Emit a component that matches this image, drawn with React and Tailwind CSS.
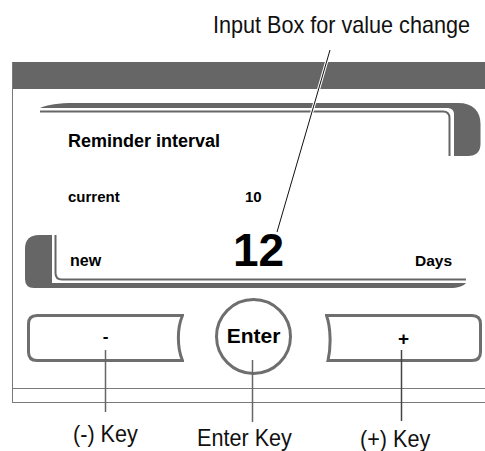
import React from "react";

const sans = "font-['Liberation_Sans',Arial,sans-serif]";

function MinusKey() {
    return (
        <div className="relative w-[157px] h-[48px] mt-[16px] ml-[14px] flex items-center justify-center">
            <svg className="absolute inset-0" width="157" height="48" viewBox="0 0 157 48">
                <path
                    d="M10 1.5 L155.5 1.5 C150 14 150 34 155.5 46.5 L10 46.5 Q1.5 46.5 1.5 38 L1.5 10 Q1.5 1.5 10 1.5 Z"
                    fill="none"
                    stroke="#6e6e6e"
                    strokeWidth="3"
                />
            </svg>
            <span className="relative text-[17px] font-bold leading-none text-black -mt-[4px]">-</span>
        </div>
    );
}

function PlusKey() {
    return (
        <div className="relative w-[157px] h-[48px] mt-[16px] ml-[33px] flex items-center justify-center">
            <svg className="absolute inset-0" width="157" height="48" viewBox="0 0 157 48">
                <path
                    d="M1.5 1.5 L147 1.5 Q155.5 1.5 155.5 10 L155.5 38 Q155.5 46.5 147 46.5 L3 46.5 C6 34 6 14 1.5 1.5 Z"
                    fill="none"
                    stroke="#6e6e6e"
                    strokeWidth="3"
                />
            </svg>
            <span className="relative text-[19px] font-bold leading-none text-black">+</span>
        </div>
    );
}

function EnterKey() {
    return (
        <div className="w-[77px] h-[77px] ml-[31px] rounded-full border-[3px] border-[#6e6e6e] flex items-center justify-center">
            <span className="text-[21px] font-bold leading-none text-black -mt-[2px]">Enter</span>
        </div>
    );
}

export default function App() {
    return (
        <div className={`relative w-[485px] h-[451px] bg-white overflow-hidden text-black ${sans}`}>
            {/* caption */}
            <div className="h-[62px] pl-[213px] pt-[13px] text-[24px] leading-none text-[#111] whitespace-nowrap">
                <span className="inline-block origin-left scale-x-[0.9]">Input Box for value change</span>
            </div>

            {/* device panel */}
            <div className="ml-[12px] border-l border-b border-[#7a7a7a]">
                <div className="h-[27px] bg-[#666666]" />

                {/* display */}
                <div className="h-[209px] flex flex-col">
                    <div className="pl-[55px] pt-[42px] text-[18px] font-bold leading-[20px]">Reminder interval</div>
                    <div className="flex pl-[55px] mt-[38px] text-[15px] font-bold leading-none">
                        <span className="w-[177px]">current</span>
                        <span>10</span>
                    </div>
                    <div className="flex items-baseline pl-[57px] mt-[23px] font-bold leading-none">
                        <span className="w-[163px] text-[16px]">new</span>
                        <span className="w-[182px] text-[46px]">12</span>
                        <span className="text-[15.5px]">Days</span>
                    </div>
                </div>

                {/* keys */}
                <div className="h-[90px] flex items-start">
                    <MinusKey />
                    <EnterKey />
                    <PlusKey />
                </div>
                <div className="h-[14px] border-t border-[#7a7a7a]" />
            </div>

            {/* key labels */}
            <div className="flex items-start text-[24px] leading-none text-[#111] whitespace-nowrap">
                <span className="w-[124px] ml-[73px] mt-[19px]">
                    <span className="inline-block origin-left scale-x-[0.9]">(-) Key</span>
                </span>
                <span className="w-[163px] mt-[23px]">
                    <span className="inline-block origin-left scale-x-[0.9]">Enter Key</span>
                </span>
                <span className="mt-[24px]">
                    <span className="inline-block origin-left scale-x-[0.9]">(+) Key</span>
                </span>
            </div>

            {/* display frame and callout lines */}
            <svg className="absolute inset-0 pointer-events-none" width="485" height="451" viewBox="0 0 485 451">
                {/* upper frame */}
                <path
                    d="M40 108 C48 104.5 58 103 75 103 L458 103 C473 103 480.5 111 480.5 124 L480.5 144 C480.5 152 476 156 468 156 L454 156 L454 114 C454 110 451 108 447 108 Z"
                    fill="#666666"
                />
                <path d="M40 111.5 L443 111.5 Q449.5 111.5 449.5 118 L449.5 156" fill="none" stroke="#666666" strokeWidth="2" />

                {/* lower frame */}
                <path
                    d="M52 235 L52 283 L466 283 C463 286.5 458 288 450 288 L34 288 Q25 288 25 279 L25 249 Q25 235 39 235 Z"
                    fill="#666666"
                />
                <path d="M55.5 235 L55.5 273 Q55.5 279.5 62 279.5 L466 279.5" fill="none" stroke="#666666" strokeWidth="2" />

                {/* callouts */}
                <line x1="330" y1="50" x2="277" y2="232" stroke="#ffffff" strokeWidth="3" />
                <line x1="330" y1="50" x2="277" y2="232" stroke="#111111" strokeWidth="1" />
                <line x1="105.5" y1="350" x2="105.5" y2="412" stroke="#666666" strokeWidth="1.5" />
                <line x1="252.5" y1="360" x2="252.5" y2="422" stroke="#666666" strokeWidth="1.5" />
                <line x1="401.5" y1="350" x2="401.5" y2="421" stroke="#444444" strokeWidth="1.5" />
            </svg>
        </div>
    );
}
